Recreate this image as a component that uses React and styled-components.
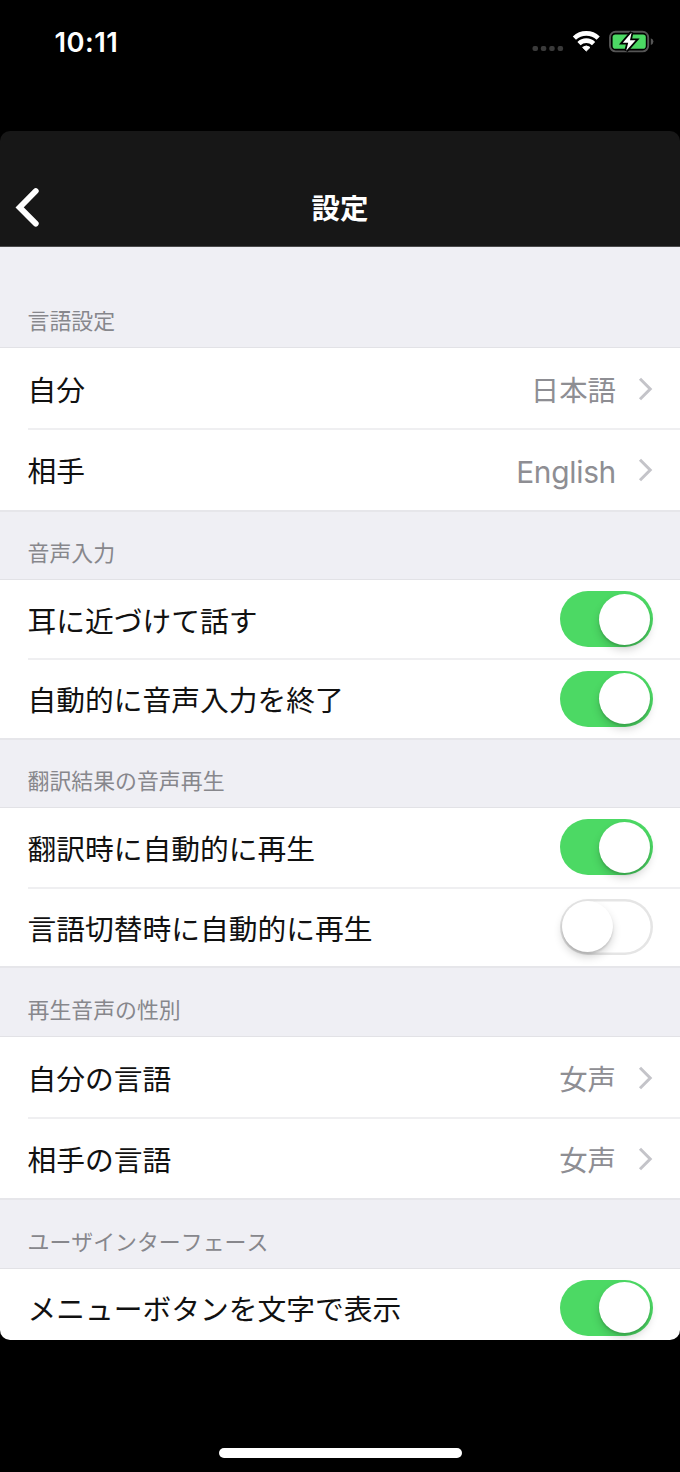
import React from "react";
import styled, { createGlobalStyle } from "styled-components";

const GlobalStyle = createGlobalStyle`
  * { box-sizing: border-box; }
  body {
    margin: 0;
    background: #000;
    font-family: Inter, "Noto Sans CJK JP", sans-serif;
    font-kerning: none;
  }
`;

const Screen = styled.div`
  width: 680px;
  height: 1472px;
  display: flex;
  flex-direction: column;
  align-items: center;
  background: #000;
  overflow: hidden;
`;

const StatusBar = styled.div`
  width: 100%;
  height: 131px;
  flex: none;
  display: flex;
  justify-content: space-between;
  align-items: flex-start;
  padding: 24px 26px 0 54.5px;
`;

const Clock = styled.time`
  color: #fff;
  font-size: 27.3px;
  letter-spacing: 0.5px;
  line-height: 36px;
  font-weight: 600;
  padding-top: 1px;
`;

const StatusIcons = styled.svg`
  width: 124px;
  height: 36px;
  display: block;
`;

const Card = styled.main`
  width: 100%;
  height: 1209px;
  flex: none;
  border-radius: 10px;
  overflow: hidden;
`;

const NavBar = styled.header`
  height: 116px;
  display: grid;
  grid-template-columns: 60px 1fr 60px;
  align-items: end;
  background: #171717;
  border-bottom: 1px solid #4a4a4b;
`;

const BackButton = styled.button`
  height: 78px;
  padding: 0 0 0 14px;
  border: 0;
  background: none;
  display: flex;
  align-items: center;
`;

const Title = styled.h1`
  margin: 0;
  height: 78px;
  line-height: 81px;
  text-align: center;
  color: #fff;
  font-size: 28.4px;
  font-weight: 700;
`;

const SectionHeader = styled.h2`
  margin: 0;
  height: ${(p) => p.$height}px;
  display: flex;
  align-items: flex-end;
  padding: 0 27.5px 10.5px;
  background: #efeff4;
  border-bottom: 1px solid #e2e2e6;
  color: #87878c;
  font-size: 21.9px;
  line-height: 32px;
  font-weight: 400;
`;

const Rows = styled.div`
  background: #fff;
  border-bottom: 2px solid #e6e6ea;
`;

const Row = styled.div`
  height: ${(p) => p.$height}px;
  margin-left: 27.5px;
  padding-right: 27px;
  display: flex;
  align-items: center;
  justify-content: space-between;
  & + & {
    border-top: 2px solid #efeff1;
    padding-bottom: 1px;
  }
`;

const Label = styled.span`
  color: #111;
  font-size: 28.75px;
  line-height: 44px;
  padding-top: 5.6px;
`;

const Detail = styled.span`
  display: flex;
  align-items: center;
  gap: 22px;
  padding-top: 2px;
`;

const Value = styled.span`
  color: #8e8e93;
  font-size: ${(p) => (p.$latin ? 29.9 : 28.4)}px;
  letter-spacing: ${(p) => (p.$latin ? -0.3 : 0)}px;
  line-height: 44px;
  padding-top: 3px;
`;

const Switch = styled.span`
  width: 93px;
  height: 56px;
  border-radius: 28px;
  padding: 0 3px 0 2px;
  display: flex;
  align-items: center;
  justify-content: ${(p) => (p.$on ? "flex-end" : "flex-start")};
  background: ${(p) => (p.$on ? "#4cd964" : "#fff")};
  box-shadow: ${(p) => (p.$on ? "none" : "inset 0 0 0 2.5px #e5e5e5")};
`;

const Knob = styled.span`
  width: 51px;
  height: 51px;
  border-radius: 50%;
  background: #fff;
  box-shadow: 0 5px 9px rgba(0, 0, 0, 0.17), 0 2px 2px rgba(0, 0, 0, 0.12);
`;

const HomeIndicator = styled.div`
  width: 243px;
  height: 10px;
  margin-top: 108px;
  border-radius: 5px;
  background: #fff;
`;

const Chevron = () => (
  <svg width="15" height="24" viewBox="0 0 15 24" fill="none">
    <path d="M2 1.8L12.2 12L2 22.2" stroke="#c4c4c9" strokeWidth="3" />
  </svg>
);

const BackIcon = () => (
  <svg width="26" height="42" viewBox="0 0 26 42" fill="none">
    <path
      d="M21.8 5L5.6 21.4L21.8 37.6"
      stroke="#fff"
      strokeWidth="5.8"
      strokeLinecap="round"
      strokeLinejoin="miter"
    />
  </svg>
);

const sections = [
  {
    title: "言語設定",
    headerHeight: 101,
    rows: [
      { label: "自分", value: "日本語", height: 80 },
      { label: "相手", value: "English", latin: true, height: 81.5 },
    ],
  },
  {
    title: "音声入力",
    headerHeight: 68.5,
    rows: [
      { label: "耳に近づけて話す", on: true, height: 78 },
      { label: "自動的に音声入力を終了", on: true, height: 80 },
    ],
  },
  {
    title: "翻訳結果の音声再生",
    headerHeight: 68,
    rows: [
      { label: "翻訳時に自動的に再生", on: true, height: 78.5 },
      { label: "言語切替時に自動的に再生", on: false, height: 79.5 },
    ],
  },
  {
    title: "再生音声の性別",
    headerHeight: 69,
    rows: [
      { label: "自分の言語", value: "女声", height: 80 },
      { label: "相手の言語", value: "女声", height: 81 },
    ],
  },
  {
    title: "ユーザインターフェース",
    headerHeight: 69,
    rows: [{ label: "メニューボタンを文字で表示", on: true, height: 77 }],
  },
];

function SettingRow({ label, value, latin, on, height }) {
  return (
    <Row $height={height}>
      <Label>{label}</Label>
      {value ? (
        <Detail>
          <Value $latin={latin}>{value}</Value>
          <Chevron />
        </Detail>
      ) : (
        <Switch $on={on} role="switch" aria-checked={on}>
          <Knob />
        </Switch>
      )}
    </Row>
  );
}

export default function App() {
  return (
    <Screen lang="ja">
      <GlobalStyle />
      <StatusBar>
        <Clock>10:11</Clock>
        <StatusIcons viewBox="530 24 124 36" fill="none">
          <g fill="#3a3a3a">
            <rect x="532.5" y="46" width="5.5" height="5" rx="2" />
            <rect x="540.8" y="46" width="5.5" height="5" rx="2" />
            <rect x="549.2" y="46" width="5.5" height="5" rx="2" />
            <rect x="557.6" y="46" width="5.5" height="5" rx="2" />
          </g>
          <g stroke="#fff" strokeWidth="4.6">
            <path d="M574.4 38.2A17.2 17.2 0 0 1 598.2 38.2" />
            <path d="M579 43.6A10.4 10.4 0 0 1 593.6 43.6" />
          </g>
          <path
            d="M582.6 47.4A6 6 0 0 1 590 47.4L586.3 51Z"
            fill="#fff"
            stroke="#fff"
            strokeWidth="1"
            strokeLinejoin="round"
          />
          <rect x="610" y="31.8" width="38.2" height="19.6" rx="5.6" stroke="#555" strokeWidth="1.9" />
          <path d="M650.8 38.3Q653.4 39 653.4 41.6Q653.4 44.2 650.8 45Z" fill="#555" />
          <rect x="612.6" y="34.5" width="33.2" height="14.2" rx="2.8" fill="#4cd964" />
          <path
            d="M631.6 32.4L622.8 42.8H628.2L626.2 50.8L635.6 40.2H630Z"
            fill="#fff"
            stroke="#000"
            strokeWidth="3.6"
            paintOrder="stroke"
          />
        </StatusIcons>
      </StatusBar>
      <Card>
        <NavBar>
          <BackButton aria-label="戻る">
            <BackIcon />
          </BackButton>
          <Title>設定</Title>
        </NavBar>
        {sections.map((section) => (
          <section key={section.title}>
            <SectionHeader $height={section.headerHeight}>{section.title}</SectionHeader>
            <Rows>
              {section.rows.map((row) => (
                <SettingRow key={row.label} {...row} />
              ))}
            </Rows>
          </section>
        ))}
      </Card>
      <HomeIndicator />
    </Screen>
  );
}
